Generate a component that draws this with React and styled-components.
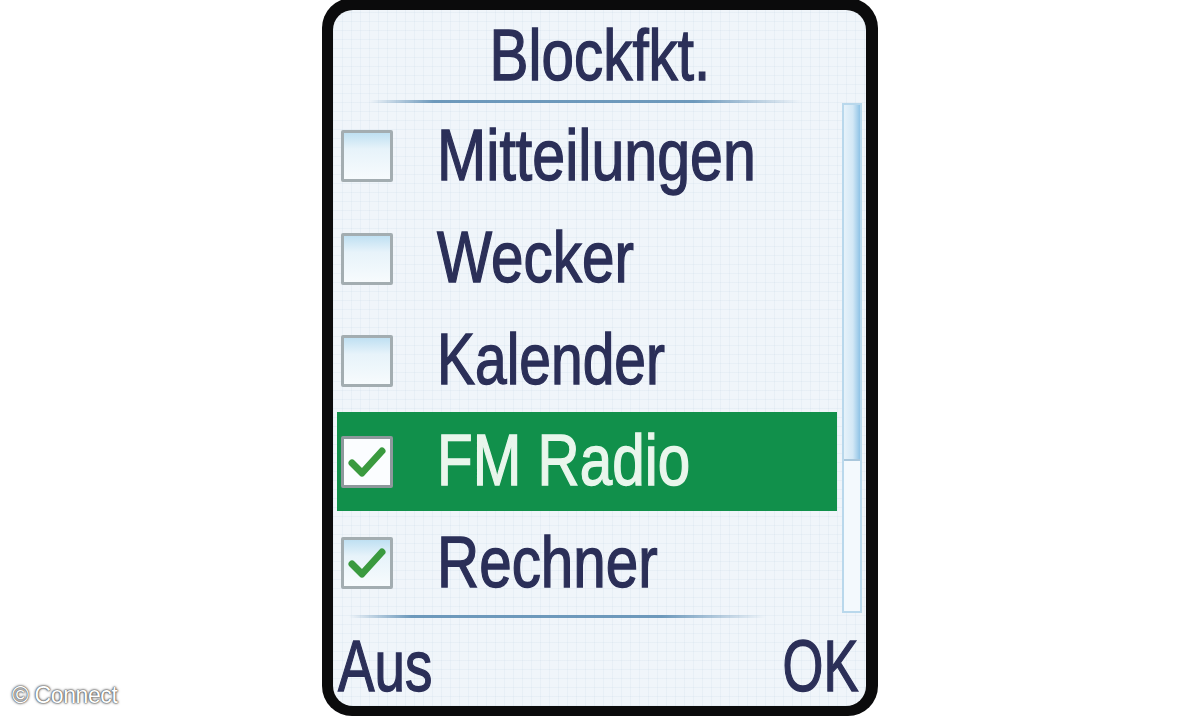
import React from "react";
import styled, { createGlobalStyle } from "styled-components";

const Global = createGlobalStyle`
  html, body {
    margin: 0;
    padding: 0;
    background: #ffffff;
  }
  body {
    font-family: "Liberation Sans", Arial, sans-serif;
  }
`;

const Page = styled.div`
  position: relative;
  width: 1200px;
  height: 720px;
  overflow: hidden;
  display: flex;
  align-items: flex-start;
  padding-left: 322px;
  box-sizing: border-box;
`;

const Frame = styled.div`
  width: 556px;
  height: 718px;
  margin-top: -2px;
  box-sizing: border-box;
  padding: 12px 12px 10px 11px;
  background: #0b0b0c;
  border-radius: 30px;
  display: flex;
`;

const Screen = styled.div`
  flex: 1;
  border-radius: 20px;
  overflow: hidden;
  display: flex;
  flex-direction: column;
  background-color: #f0f5fa;
  background-image: repeating-linear-gradient(
      0deg,
      rgba(170, 195, 215, 0.12) 0 1px,
      transparent 1px 9px
    ),
    repeating-linear-gradient(
      90deg,
      rgba(170, 195, 215, 0.12) 0 1px,
      transparent 1px 9px
    );
`;

const Label = styled.span`
  display: inline-block;
  font-size: 73px;
  line-height: 1;
  white-space: nowrap;
  color: ${({ light }) => (light ? "#e9f6ec" : "#2b2f58")};
  -webkit-text-stroke: 1.4px ${({ light }) => (light ? "#e9f6ec" : "#2b2f58")};
  transform: scaleX(${({ squeeze }) => squeeze || 0.8});
  transform-origin: ${({ origin }) => origin || "left"} center;
`;

const TitleBar = styled.div`
  height: 88px;
  display: flex;
  align-items: center;
  justify-content: center;
  padding-bottom: 2px;
`;

const Rule = styled.div`
  height: 3px;
  margin: 0 ${({ right }) => right}px 0 ${({ left }) => left}px;
  background: linear-gradient(
    90deg,
    rgba(95, 143, 181, 0) 0%,
    rgba(95, 143, 181, 0.9) 15%,
    rgba(95, 143, 181, 0.9) 75%,
    rgba(95, 143, 181, 0) 100%
  );
`;

const Body = styled.div`
  height: 512px;
  display: flex;
  padding: 0 4px 0 4px;
  gap: 5px;
`;

const List = styled.div`
  flex: 1;
  display: flex;
  flex-direction: column;
  padding-top: 2px;
`;

const Row = styled.div`
  height: ${({ h }) => h}px;
  display: flex;
  align-items: center;
  padding-left: 4px;
  background: ${({ active }) => (active ? "#11904b" : "transparent")};
`;

const Box = styled.div`
  width: 46px;
  height: 46px;
  flex-shrink: 0;
  border: 3px solid ${({ active }) => (active ? "#8e989c" : "#a3adb1")};
  border-radius: 2px;
  background: ${({ active }) =>
    active
      ? "#fbfdff"
      : "linear-gradient(180deg, #bfe0f2 0%, #e7f3fa 35%, #f7fbfd 100%)"};
  display: flex;
  align-items: center;
  justify-content: center;
  margin-right: 44px;
`;

const TextCell = styled.div`
  display: flex;
  align-items: center;
  padding-bottom: 4px;
`;

const Scroll = styled.div`
  width: 20px;
  height: 510px;
  box-sizing: border-box;
  border: 2px solid #b9d8ec;
  background: #f3f9fd;
  display: flex;
  flex-direction: column;
`;

const Thumb = styled.div`
  height: 354px;
  background: linear-gradient(90deg, #e6f2fa 0%, #d3e8f6 55%, #8fc3e6 100%);
  border-bottom: 2px solid #a9c7dc;
`;

const SoftKeys = styled.div`
  flex: 1;
  display: flex;
  align-items: center;
  justify-content: space-between;
  padding: 6px 8px 0 5px;
`;

const Watermark = styled.div`
  position: absolute;
  left: 12px;
  bottom: 11px;
  font-family: "Liberation Sans", Arial, sans-serif;
  font-size: 23px;
  color: #ffffff;
  text-shadow: 0 0 3px #555, 0 0 2px #555, 0 0 1px #333;
  letter-spacing: -0.4px;
`;

const Check = () => (
  <svg width="40" height="36" viewBox="0 0 40 36">
    <path
      d="M5 19 L15 29 L35 7"
      fill="none"
      stroke="#3a9a3f"
      strokeWidth="7"
      strokeLinecap="round"
      strokeLinejoin="round"
    />
  </svg>
);

const items = [
  { label: "Mitteilungen", h: 103, squeeze: 0.81 },
  { label: "Wecker", h: 103, squeeze: 0.8 },
  { label: "Kalender", h: 102, squeeze: 0.78 },
  { label: "FM Radio", h: 100, checked: true, active: true, squeeze: 0.8 },
  { label: "Rechner", h: 104, checked: true, squeeze: 0.8 },
];

export default function App() {
  return (
    <>
      <Global />
      <Page>
        <Frame>
          <Screen>
            <TitleBar>
              <Label squeeze={0.8} origin="center">
                Blockfkt.
              </Label>
            </TitleBar>
            <Rule left={36} right={64} />
            <Body>
              <List>
                {items.map((it) => (
                  <Row key={it.label} h={it.h} active={it.active}>
                    <Box active={it.active}>{it.checked && <Check />}</Box>
                    <TextCell>
                      <Label light={it.active} squeeze={it.squeeze}>
                        {it.label}
                      </Label>
                    </TextCell>
                  </Row>
                ))}
              </List>
              <Scroll>
                <Thumb />
              </Scroll>
            </Body>
            <Rule left={16} right={100} />
            <SoftKeys>
              <Label squeeze={0.75}>Aus</Label>
              <Label squeeze={0.72} origin="right">
                OK
              </Label>
            </SoftKeys>
          </Screen>
        </Frame>
        <Watermark>© Connect</Watermark>
      </Page>
    </>
  );
}
